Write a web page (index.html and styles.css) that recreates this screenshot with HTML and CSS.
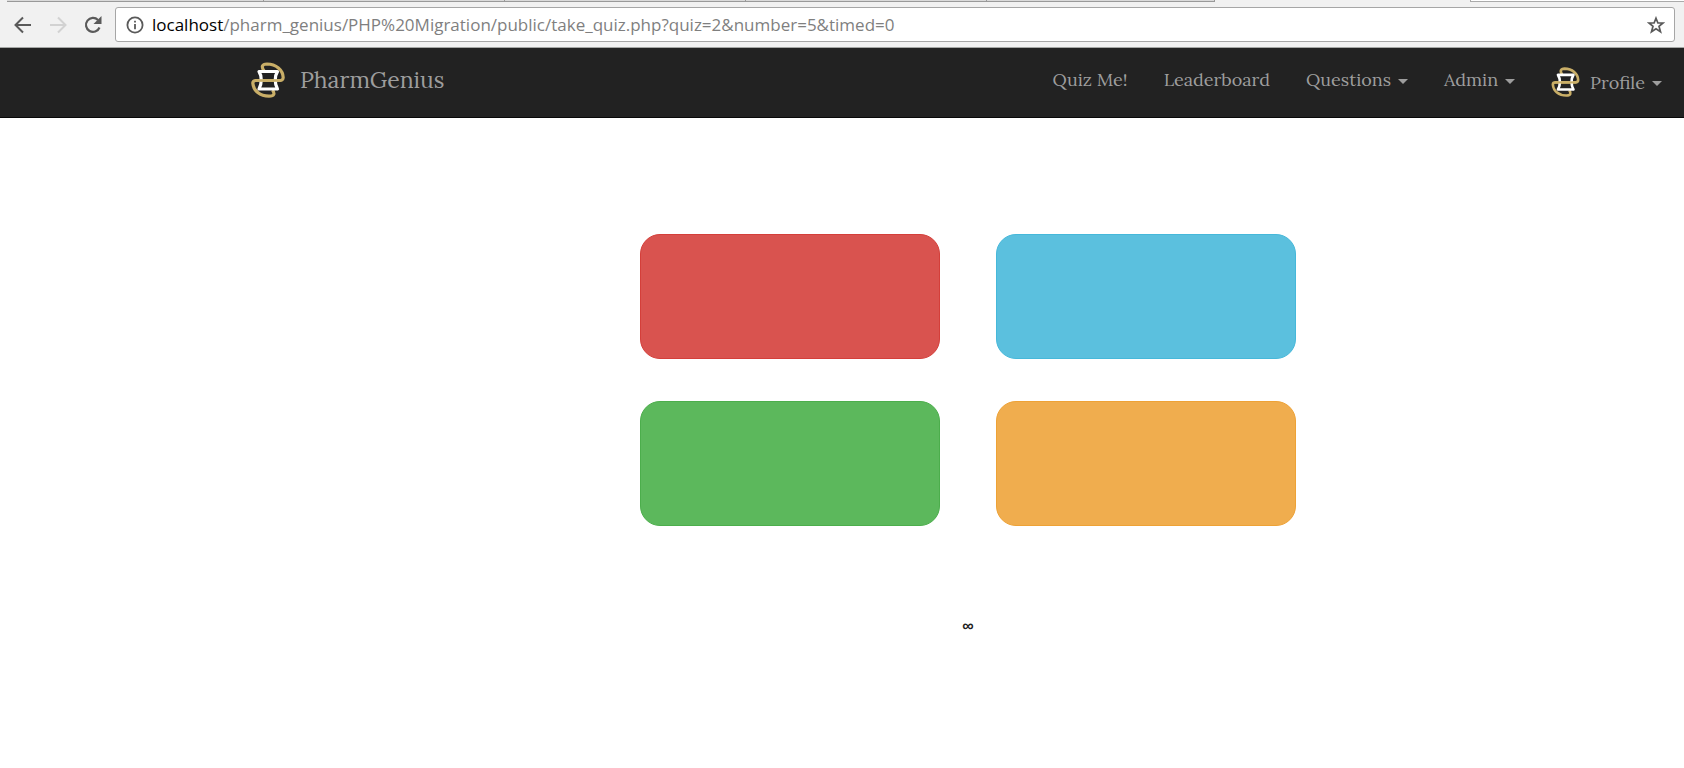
FILE: index.html
```html
<!DOCTYPE html>
<html lang="en">
<head>
<meta charset="utf-8">
<title>PharmGenius</title>
<link rel="stylesheet" href="styles.css">
</head>
<body>
<svg class="defs" aria-hidden="true">
  <symbol id="logo" viewBox="0 0 34 36">
    <path fill="none" stroke="#c9ae67" stroke-width="3.2" d="M13 9C10 4.500 11 2.200 16 2C25 2 32 8 32.200 15.500Q32 18.500 29 18.500H5Q2 18.500 1.800 21C2.500 29 9 34.200 18 34.200C23.500 34.200 24 31.500 21.500 28"/>
    <path fill="none" stroke="#fff" stroke-width="3.2" stroke-linejoin="round" d="M8 9.500H26.500C23.500 14 23.500 22 26.500 27H8C11 22 11 14 8 9.500Z"/>
    <path fill="none" stroke="#c9ae67" stroke-width="2.600" d="M4 18.500H30"/>
  </symbol>
</svg>
<header class="browser">
  <div class="tabs"><span class="tab first"></span><span class="tab"></span><span class="tab"></span><span class="tab"></span><span class="tab"></span><span class="tab-active"></span><span class="tab-rest"></span></div>
  <div class="toolbar">
    <button class="tool" aria-label="Back"><svg width="18" height="18" viewBox="0 0 18 18"><path d="M17 9H2M9 1.500L1.500 9L9 16.500" fill="none" stroke="#5a5a5a" stroke-width="2"/></svg></button>
    <button class="tool" aria-label="Forward"><svg width="18" height="18" viewBox="0 0 18 18"><path d="M1 9H16M9 1.500L16.500 9L9 16.500" fill="none" stroke="#d2d2d2" stroke-width="2"/></svg></button>
    <button class="tool" aria-label="Reload"><svg width="18" height="18" viewBox="0 0 18 18"><path d="M15.500 11.500A7 7 0 1 1 14 4" fill="none" stroke="#5a5a5a" stroke-width="2.200"/><path d="M17.500 0V8H9.500Z" fill="#5a5a5a"/></svg></button>
    <div class="address">
      <svg width="18" height="18" viewBox="0 0 18 18"><circle cx="9" cy="9" r="7.600" fill="none" stroke="#5a5a5a" stroke-width="1.800"/><path d="M9 8V13.200M9 4.800V6.600" stroke="#5a5a5a" stroke-width="1.800"/></svg>
      <span class="url"><span class="host">localhost</span>/pharm_genius/PHP%20Migration/public/take_quiz.php?quiz=2&amp;number=5&amp;timed=0</span>
      <button class="star" aria-label="Bookmark"><svg width="18" height="18" viewBox="0 0 18 18"><path d="M9 2.200L10.900 7H16L12 10.300L13.500 15.800L9 12.700L4.500 15.800L6 10.300L2 7H7.100Z" fill="none" stroke="#5a5a5a" stroke-width="1.700"/></svg></button>
    </div>
  </div>
</header>
<nav class="navbar">
  <a class="brand" href="#"><svg width="34" height="36"><use href="#logo"/></svg>PharmGenius</a>
  <div class="menu">
    <a href="#">Quiz Me!</a>
    <a href="#">Leaderboard</a>
    <a href="#">Questions<span class="caret"></span></a>
    <a href="#">Admin<span class="caret"></span></a>
    <a class="profile" href="#"><svg class="avatar" width="29" height="30"><use href="#logo"/></svg>Profile<span class="caret"></span></a>
  </div>
</nav>
<main class="quiz">
  <div class="answers">
    <button class="answer red" aria-label="Answer 1"></button>
    <button class="answer blue" aria-label="Answer 2"></button>
    <button class="answer green" aria-label="Answer 3"></button>
    <button class="answer orange" aria-label="Answer 4"></button>
  </div>
  <p class="timer">∞</p>
</main>
</body>
</html>
```
FILE: styles.css
```css
* { box-sizing: border-box; }
body { margin: 0; background: #fff; font-family: Lora, "Liberation Serif", serif; color: #222; }
button { border: 0; padding: 0; background: none; cursor: pointer; }
svg { display: block; flex: none; }
.defs { position: absolute; width: 0; height: 0; }

.browser { background: #f1f1f1; border-bottom: 1px solid #a5a7a5; }
.tabs { display: flex; height: 2px; padding-left: 7px; }
.tab { width: 241px; background: #dadada; border-bottom: 1px solid #999; border-right: 1px solid #999; }
.tab.first { width: 257px; }
.tab:nth-child(5) { width: 228px; }
.tab-active { width: 255px; }
.tab-rest { flex: 1; background: #fff; border-bottom: 1px solid #aaa; border-left: 1px solid #aaa; }
.toolbar { display: flex; align-items: center; padding: 5px 9px 5px 14px; }
.tool { margin-right: 17px; }
.tool:nth-child(3) { margin-right: 13px; }
.address { flex: 1; display: flex; align-items: center; gap: 8px; height: 35px; padding: 0 9px 0 10px; background: #fff; border: 1px solid #a6a6a6; border-radius: 3px; }
.url { flex: 1; font: 17px/24px "Open Sans", "Noto Sans", sans-serif; color: #7f7f7f; white-space: nowrap; }
.host { color: #000; }

.navbar { display: flex; justify-content: space-between; min-height: 70px; padding: 0 22px 0 251px; background: #222; border-bottom: 1px solid #080808; }
.navbar a { display: flex; align-items: center; color: #9d9d9d; text-decoration: none; white-space: nowrap; }
.brand { gap: 15px; height: 63px; font-size: 23px; }
.menu { display: flex; gap: 36px; height: 63px; font-size: 18px; }
.navbar .profile { height: 68px; }
.avatar { margin-right: 10px; }
.caret { margin: 3px 0 0 7px; border: 5px solid transparent; border-top-color: #9d9d9d; border-bottom: 0; }

.quiz { padding: 116px 0 0 252px; }
.answers { display: grid; grid-template-columns: 300px 300px; justify-content: center; gap: 42px 56px; }
.answer { height: 125px; border-radius: 20px; border: 1px solid; }
.red { background: #d9534f; border-color: #d43f3a; }
.blue { background: #5bc0de; border-color: #46b8da; }
.green { background: #5cb85c; border-color: #4cae4c; }
.orange { background: #f0ad4e; border-color: #eea236; }
.timer { margin: 88px 0 0; text-align: center; font: bold 16px/24px "Liberation Sans", sans-serif; }
```
